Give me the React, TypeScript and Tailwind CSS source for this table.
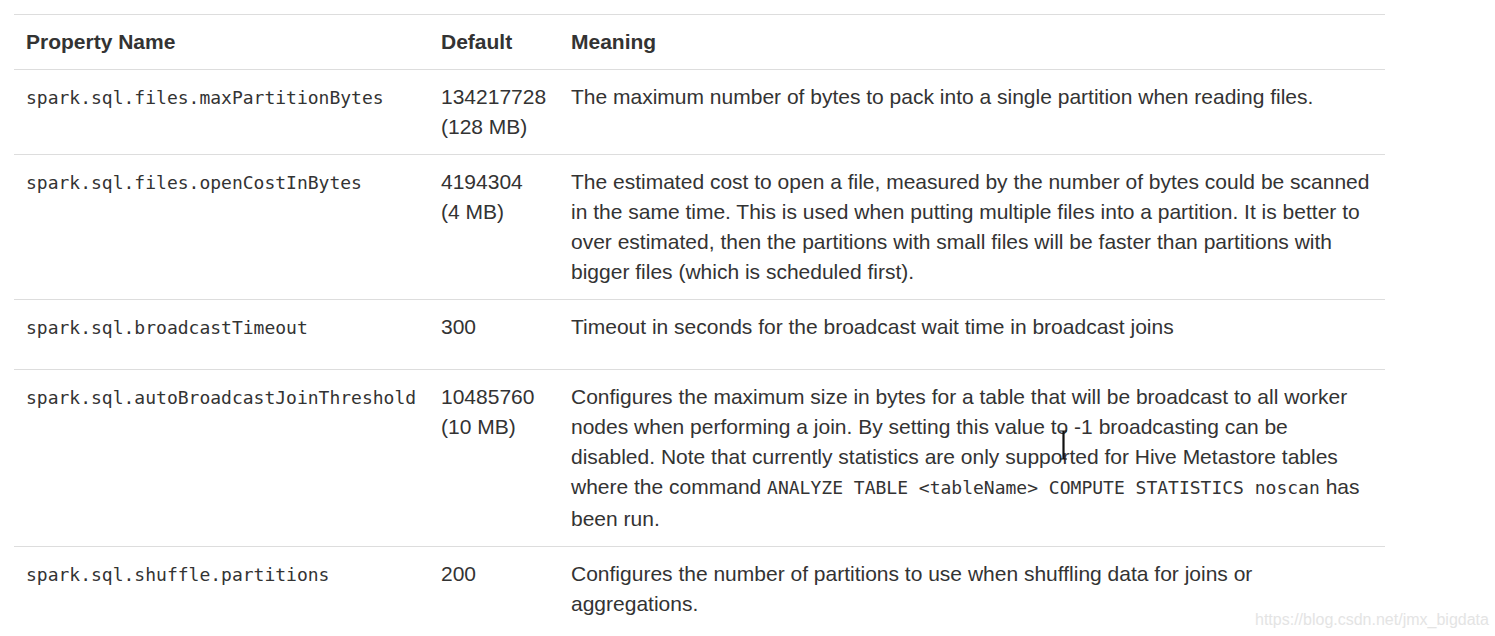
import React from "react";

type Row = {
  name: string;
  def: string[];
  meaning: React.ReactNode;
  extra?: string;
};

const rows: Row[] = [
  {
    name: "spark.sql.files.maxPartitionBytes",
    def: ["134217728", "(128 MB)"],
    meaning: "The maximum number of bytes to pack into a single partition when reading files.",
  },
  {
    name: "spark.sql.files.openCostInBytes",
    def: ["4194304", "(4 MB)"],
    meaning:
      "The estimated cost to open a file, measured by the number of bytes could be scanned in the same time. This is used when putting multiple files into a partition. It is better to over estimated, then the partitions with small files will be faster than partitions with bigger files (which is scheduled first).",
  },
  {
    name: "spark.sql.broadcastTimeout",
    def: ["300"],
    meaning: "Timeout in seconds for the broadcast wait time in broadcast joins",
    extra: "h-[70px]",
  },
  {
    name: "spark.sql.autoBroadcastJoinThreshold",
    def: ["10485760", "(10 MB)"],
    meaning: (
      <>
        Configures the maximum size in bytes for a table that will be broadcast to all worker nodes when performing a
        join. By setting this value to -1 broadcasting can be disabled. Note that currently statistics are only
        supported for Hive Metastore tables where the command{" "}
        <code className="font-['DejaVu_Sans_Mono',monospace] text-[18px] leading-[32px]">
          ANALYZE TABLE &lt;tableName&gt; COMPUTE STATISTICS noscan
        </code>{" "}
        has been run.
      </>
    ),
  },
  {
    name: "spark.sql.shuffle.partitions",
    def: ["200"],
    meaning: "Configures the number of partitions to use when shuffling data for joins or aggregations.",
  },
];

export default function App() {
  return (
    <div className="relative h-[636px] w-[1495px] overflow-hidden bg-white font-['Liberation_Sans',Arial,sans-serif] text-[21px] leading-[30px] text-[#333]">
      <table className="ml-[14px] mt-[14px] w-[1371px] border-collapse">
        <colgroup>
          <col className="w-[415px]" />
          <col className="w-[130px]" />
          <col />
        </colgroup>
        <thead>
          <tr className="border-t border-[#ddd] text-left">
            <th className="px-3 pb-[12px] pt-[12px] align-top font-bold">Property Name</th>
            <th className="px-3 pb-[12px] pt-[12px] align-top font-bold">Default</th>
            <th className="px-3 pb-[12px] pt-[12px] align-top font-bold">Meaning</th>
          </tr>
        </thead>
        <tbody>
          {rows.map((r) => (
            <tr key={r.name} className={`border-t border-[#ddd] ${r.extra ?? ""}`}>
              <td className="px-3 pb-[12px] pt-[12px] align-top">
                <code className="font-['DejaVu_Sans_Mono',monospace] text-[18px]">{r.name}</code>
              </td>
              <td className="px-3 pb-[12px] pt-[12px] align-top">
                {r.def.map((d, i) => (
                  <div key={i}>{d}</div>
                ))}
              </td>
              <td className="px-3 pb-[12px] pt-[12px] align-top">{r.meaning}</td>
            </tr>
          ))}
        </tbody>
      </table>

      {/* text cursor */}
      <svg className="absolute left-[1058px] top-[430px]" width="12" height="30" viewBox="0 0 12 30">
        <path d="M2 1h3v28H2M9 1H6v28h3" fill="none" stroke="#111" strokeWidth="1.2" />
      </svg>

      <div className="absolute left-[1255px] top-[608px] text-[16px] leading-[24px] text-[#e4e4e4]">
        https://blog.csdn.net/jmx_bigdata
      </div>
    </div>
  );
}
